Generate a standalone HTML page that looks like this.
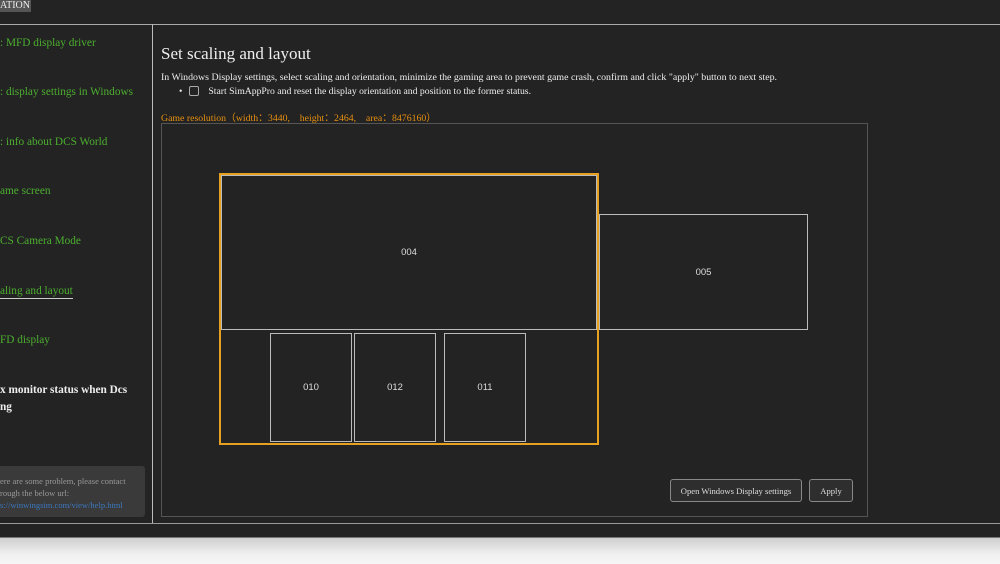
<!DOCTYPE html>
<html><head><meta charset="utf-8"><style>
*{margin:0;padding:0;box-sizing:border-box}
body{width:1000px;height:564px;overflow:hidden;background:#232323;font-family:"Liberation Serif",serif;position:relative}
.abs{position:absolute}
.nav{position:absolute;left:0;color:#4caf2f;font-size:11.3px;white-space:nowrap}
.box{position:absolute;border:1px solid #bbb;color:#ddd;font-family:"Liberation Sans",sans-serif;font-size:9.5px;display:flex;align-items:center;justify-content:center}
.btn{position:absolute;border:1px solid #888;border-radius:3px;background:#2e2e2e;color:#ddd;font-size:8.6px;display:flex;align-items:center;justify-content:center}
</style></head><body>
<div class="abs" style="left:0;top:0;width:31px;height:12px;background:#555;color:#eee;font-size:10px;line-height:11px;overflow:hidden;white-space:nowrap;text-align:right;padding-right:2px">ATION</div>
<div class="abs" style="left:0;top:24px;width:1000px;height:1px;background:#aaa"></div>
<div class="abs" style="left:152px;top:24px;width:1px;height:500px;background:#bbb"></div>
<div class="abs" style="left:0;top:523px;width:1000px;height:1px;background:#999"></div>
<div class="abs" style="left:0;top:537px;width:1000px;height:1px;background:#777"></div>
<div class="abs" style="left:0;top:538px;width:1000px;height:26px;background:linear-gradient(#cfcfcf,#efefef 60%,#f6f6f6)"></div>

<div class="nav" style="top:37px">: MFD display driver</div>
<div class="nav" style="top:86px">: display settings in Windows</div>
<div class="nav" style="top:136px">: info about DCS World</div>
<div class="nav" style="top:185px">ame screen</div>
<div class="nav" style="top:235px">CS Camera Mode</div>
<div class="nav" style="top:284px;border-bottom:1px solid #ccc;line-height:14px">aling and layout</div>
<div class="nav" style="top:334px">FD display</div>
<div class="nav" style="top:382px;color:#eee;font-weight:bold;line-height:17px">x monitor status when Dcs<br>ng</div>
<div class="abs" style="left:0;top:466px;width:145px;height:51px;background:#3a3a3a;border-radius:0 3px 3px 0;font-size:8.5px;color:#999;padding:9px 0 0 0;line-height:12px;white-space:nowrap">ere are some problem, please contact<br>rough the below url:<br><span style="color:#3a78c0">s://winwingsim.com/view/help.html</span></div>

<div class="abs" style="left:161px;top:44px;color:#eee;font-size:17px">Set scaling and layout</div>
<div class="abs" style="left:161px;top:72px;color:#eee;font-size:9.9px;white-space:nowrap">In Windows Display settings, select scaling and orientation, minimize the gaming area to prevent game crash, confirm and click "apply" button to next step.</div>
<div class="abs" style="left:179px;top:86px;color:#eee;font-size:9.7px;white-space:nowrap">•<span style="display:inline-block;width:10px;height:10px;border:1px solid #aaa;border-radius:2px;margin:0 9px 0 7px;vertical-align:-2px"></span>Start SimAppPro and reset the display orientation and position to the former status.</div>
<div class="abs" style="left:161px;top:110px;color:#e8900f;font-size:9.8px;white-space:nowrap">Game resolution（width：3440,　height：2464,　area：8476160）</div>

<div class="abs" style="left:161px;top:123px;width:707px;height:394px;border:1px solid #555"></div>
<div class="abs" style="left:219px;top:173px;width:380px;height:272px;border:2px solid #e8a020"></div>
<div class="box" style="left:221px;top:175px;width:376px;height:155px">004</div>
<div class="box" style="left:599px;top:214px;width:209px;height:116px">005</div>
<div class="box" style="left:270px;top:333px;width:82px;height:109px">010</div>
<div class="box" style="left:354px;top:333px;width:82px;height:109px">012</div>
<div class="box" style="left:444px;top:333px;width:82px;height:109px">011</div>

<div class="btn" style="left:670px;top:479px;width:132px;height:23px">Open Windows Display settings</div>
<div class="btn" style="left:809px;top:479px;width:44px;height:23px">Apply</div>
</body></html>
